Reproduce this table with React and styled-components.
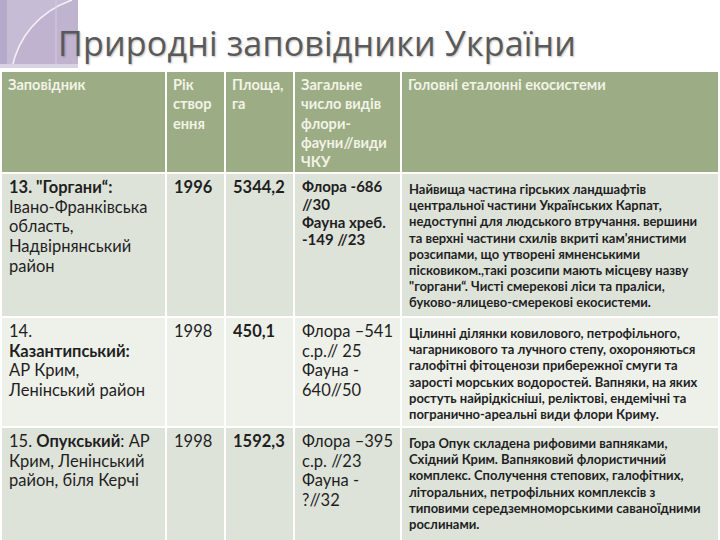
import styled, { createGlobalStyle } from 'styled-components'

const GlobalStyle = createGlobalStyle`
  html, body {
    margin: 0;
    padding: 0;
    background: #ffffff;
  }
  body {
    overflow: hidden;
  }
`;

const Page = styled.div`
  width: 720px;
  height: 540px;
  overflow: hidden;
  background: #ffffff;
`;

const TitleBar = styled.header`
  position: relative;
  height: 72px;
  display: flex;
  align-items: flex-end;
`;

const Logo = styled.svg`
  position: absolute;
  left: 0;
  top: 0;
  width: 78px;
  height: 68px;
`;

const Title = styled.h1`
  position: relative;
  margin: 0 0 7px 58px;
  font-family: "Open Sans", "Noto Sans", sans-serif;
  font-weight: 400;
  font-size: 34px;
  line-height: 44px;
  color: #595959;
  letter-spacing: 0.2px;
  text-shadow: 1px 1px 2px rgba(0, 0, 0, 0.25);
`;

const Table = styled.table`
  width: 720px;
  border-collapse: collapse;
  table-layout: fixed;
  font-family: Lato, "Noto Sans", sans-serif;
  color: #1f1f1f;
`;

const HeadCell = styled.th`
  background: #9cac84;
  color: #f2f3e6;
  font-weight: 700;
  font-size: 14.6px;
  line-height: 19.3px;
  text-align: left;
  vertical-align: top;
  padding: 3px 2px 0 6px;
  border: 2px solid #ffffff;
  border-top: 0;
  height: 101px;
  box-sizing: border-box;
`;

const Row = styled.tr`
  background: ${p => (p.$light ? '#eef0ea' : '#dee3da')};
`;

const Cell = styled.td`
  vertical-align: top;
  padding: ${p => (p.$desc ? '7px 2px 0 7px' : '4px 2px 0 7px')};
  border: 2px solid #ffffff;
  font-size: ${p => (p.$desc ? '13px' : p.$small ? '15px' : '16.5px')};
  line-height: ${p => (p.$desc ? '16.2px' : p.$small ? '17.8px' : '19.7px')};
  font-weight: ${p => (p.$bold || p.$desc ? 700 : 400)};
  height: ${p => p.$h}px;
  box-sizing: border-box;
`;

const Line = styled.span`
  display: block;
  white-space: nowrap;
`;

const B = styled.b`
  font-weight: 700;
`;

const headers = [
  ['Заповідник'],
  ['Рік', 'створ', 'ення'],
  ['Площа,', 'га'],
  ['Загальне', 'число видів', 'флори-', 'фауни//види', 'ЧКУ'],
  ['Головні еталонні екосистеми'],
];

const rows = [
  {
    h: 144,
    name: [<B key="b">13. "Горгани“:</B>, 'Івано-Франківська', 'область,', 'Надвірнянський', 'район'],
    year: '1996',
    yearBold: true,
    area: '5344,2',
    species: ['Флора -686', '//30', 'Фауна хреб.', '-149 //23'],
    speciesBold: true,
    desc: [
      'Найвища частина гірських ландшафтів',
      'центральної частини Українських Карпат,',
      'недоступні для людського втручання. вершини',
      'та верхні частини схилів вкриті кам\'янистими',
      'розсипами, що утворені ямненськими',
      'пісковиком.,такі розсипи мають місцеву назву',
      '"горгани“. Чисті смерекові ліси  та праліси,',
      'буково-ялицево-смерекові екосистеми.',
    ],
  },
  {
    h: 110,
    light: true,
    name: ['14.', <B key="b">Казантипський:</B>, 'АР Крим,', 'Ленінський район'],
    year: '1998',
    area: '450,1',
    species: ['Флора –541', 'с.р.// 25', 'Фауна -', '640//50'],
    desc: [
      'Цілинні ділянки ковилового, петрофільного,',
      'чагарникового та лучного степу, охороняються',
      'галофітні фітоценози прибережної смуги та',
      'зарості морських водоростей. Вапняки, на яких',
      'ростуть найрідкісніші, реліктові, ендемічні та',
      'погранично-ареальні види флори Криму.',
    ],
  },
  {
    h: 116,
    name: [
      <span key="a">15. <B>Опукський</B>: АР</span>,
      'Крим, Ленінський',
      'район, біля Керчі',
    ],
    year: '1998',
    area: '1592,3',
    species: ['Флора –395', 'с.р. //23', 'Фауна -', '?//32'],
    desc: [
      'Гора Опук складена рифовими вапняками,',
      'Східний Крим. Вапняковий флористичний',
      'комплекс. Сполучення степових, галофітних,',
      'літоральних, петрофільних комплексів з',
      'типовими середземноморськими саваноїдними',
      'рослинами.',
    ],
  },
];

const Lines = ({ items }) => items.map((t, i) => <Line key={i}>{t}</Line>);

const LogoMark = () => (
  <Logo viewBox="0 0 78 68">
    <rect width="78" height="68" fill="#c6bcd6" />
    <rect width="7" height="68" fill="#b6aacb" />
    <path d="M12 68 C 18 38, 38 12, 72 0 L 78 0 L 78 68 Z" fill="#bfb3d0" />
    <path d="M12 68 C 18 38, 38 12, 72 0" stroke="#f4f0f8" strokeWidth="1.6" fill="none" />
    <line x1="56" y1="0" x2="56" y2="68" stroke="#d3cbe0" strokeWidth="1" />
    <rect y="64" width="78" height="4" fill="#d9d2e4" />
  </Logo>
);

const App = () => (
  <Page>
    <GlobalStyle />
    <TitleBar>
      <LogoMark />
      <Title>Природні заповідники України</Title>
    </TitleBar>
    <Table>
      <colgroup>
        <col style={{ width: 165 }} />
        <col style={{ width: 59 }} />
        <col style={{ width: 69 }} />
        <col style={{ width: 107 }} />
        <col />
      </colgroup>
      <thead>
        <tr>
          {headers.map((h, i) => (
            <HeadCell key={i}>
              <Lines items={h} />
            </HeadCell>
          ))}
        </tr>
      </thead>
      <tbody>
        {rows.map((r, i) => (
          <Row key={i} $light={r.light}>
            <Cell $h={r.h}>
              <Lines items={r.name} />
            </Cell>
            <Cell $h={r.h} $bold={r.yearBold}>{r.year}</Cell>
            <Cell $h={r.h} $bold>{r.area}</Cell>
            <Cell $h={r.h} $bold={r.speciesBold} $small={r.speciesBold}>
              <Lines items={r.species} />
            </Cell>
            <Cell $h={r.h} $desc>
              <Lines items={r.desc} />
            </Cell>
          </Row>
        ))}
      </tbody>
    </Table>
  </Page>
);

export default App
